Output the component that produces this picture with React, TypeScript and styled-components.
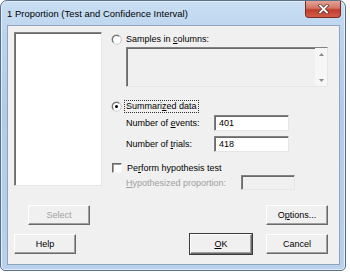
import styled, { createGlobalStyle } from "styled-components"

const Global = createGlobalStyle`
  html, body { margin: 0; padding: 0; background: #ffffff; }
  body { font-family: "Liberation Sans", Arial, sans-serif; font-size: 9px; color: #000; }
`

const Frame = styled.div`
  width: 346px;
  height: 271px;
  box-sizing: border-box;
  border: 1px solid #5a6f88;
  border-radius: 7px 7px 5px 5px;
  background: linear-gradient(180deg, #c9def3 0%, #bcd5ee 12%, #b2cce8 40%, #b9d1ea 100%);
  display: flex;
  flex-direction: column;
  padding: 0 5px 5px 6px;
  box-shadow: inset 0 0 0 1px #e4eef9;
`

const TitleBar = styled.div`
  height: 24px;
  display: flex;
  justify-content: space-between;
  align-items: flex-start;
`

const Title = styled.div`
  font-size: 9.4px;
  margin-top: 7px;
  color: #000;
  letter-spacing: 0.05px;
`

const CloseBtn = styled.div`
  width: 36px;
  height: 17px;
  margin-right: -1px;
  box-sizing: border-box;
  border: 1px solid #7a2a25;
  border-top: none;
  border-radius: 0 0 4px 4px;
  background: linear-gradient(180deg, #e3a597 0%, #d27464 45%, #c03d2c 55%, #d35d48 100%);
  display: flex;
  align-items: center;
  justify-content: center;
  svg { display: block; }
`

const Client = styled.div`
  flex: 1;
  background: #f0f0f0;
  border: 1px solid #8ea4bf;
  padding: 6px 11px 0 6px;
  display: flex;
  flex-direction: column;
`

const TopArea = styled.div`
  display: flex;
  gap: 10px;
`

const Sunken = styled.div<{ $bg?: string }>`
  box-sizing: border-box;
  background: ${(p) => p.$bg || "#ffffff"};
  border: 1px solid;
  border-color: #828282 #e6e6e6 #e6e6e6 #828282;
  box-shadow: inset 1px 1px 0 #696969;
`

const ListBox = styled(Sunken)`
  width: 92px;
  height: 154px;
`

const RightPanel = styled.div`
  flex: 1;
  display: flex;
  flex-direction: column;
`

const OptionRow = styled.label<{ $mt?: number }>`
  display: flex;
  align-items: center;
  gap: 3px;
  height: 12px;
  margin-top: ${(p) => p.$mt || 0}px;
`

const Radio = styled.span<{ $checked?: boolean }>`
  width: 9px;
  height: 9px;
  box-sizing: border-box;
  border-radius: 50%;
  border: 1px solid;
  border-color: #6a6a6a #f8f8f8 #f8f8f8 #6a6a6a;
  background: #fff;
  display: flex;
  align-items: center;
  justify-content: center;
  box-shadow: 0 0 0 0.5px #a0a0a0;
  &::after {
    content: "";
    width: 3px;
    height: 3px;
    border-radius: 50%;
    background: ${(p) => (p.$checked ? "#000" : "transparent")};
  }
`

const Check = styled.span`
  width: 10px;
  height: 10px;
  box-sizing: border-box;
  background: #fff;
  border: 1px solid;
  border-color: #6a6a6a #f4f4f4 #f4f4f4 #6a6a6a;
  box-shadow: inset 1px 1px 0 #9a9a9a;
`

const Caption = styled.span<{ $focus?: boolean }>`
  padding: 0 1px;
  border: 1px ${(p) => (p.$focus ? "dotted #333" : "solid transparent")};
  line-height: 11px;
`

const ColumnsBox = styled(Sunken)`
  width: 202px;
  height: 40px;
  margin: 2px 0 0 14px;
  display: flex;
  justify-content: flex-end;
`

const ScrollCol = styled.div`
  width: 12px;
  display: flex;
  flex-direction: column;
  justify-content: space-between;
  align-items: center;
  padding: 5px 0 4px;
  margin-right: 0;
  background: #f6f6f6;
`

const FieldRow = styled.div<{ $mt: number; $dim?: boolean }>`
  display: flex;
  align-items: center;
  margin: ${(p) => p.$mt}px 0 0 14px;
  color: ${(p) => (p.$dim ? "#a0a0a0" : "#000")};
`

const FieldLabel = styled.span<{ $w: number }>`
  width: ${(p) => p.$w}px;
`

const Input = styled(Sunken)<{ $w: number; $h: number }>`
  width: ${(p) => p.$w}px;
  height: ${(p) => p.$h}px;
  padding-left: 4px;
  display: flex;
  align-items: center;
  color: #000;
`

const ButtonRow = styled.div<{ $mt: number }>`
  display: flex;
  align-items: center;
  margin-top: ${(p) => p.$mt}px;
`

const Button = styled.div<{ $disabled?: boolean; $default?: boolean; $ml?: number }>`
  width: 62px;
  height: 20px;
  box-sizing: border-box;
  margin-left: ${(p) => p.$ml || 0}px;
  background: #f0f0f0;
  border: 1px solid;
  border-color: #ffffff #696969 #696969 #ffffff;
  box-shadow: ${(p) =>
    p.$default ? "inset -1px -1px 0 #a0a0a0, 0 0 0 1px #3c3c3c" : "inset -1px -1px 0 #a0a0a0"};
  display: flex;
  align-items: center;
  justify-content: center;
  color: ${(p) => (p.$disabled ? "#a0a0a0" : "#000")};
`

const Spacer = styled.div`
  flex: 1;
`

function Arrow({ up }: { up?: boolean }) {
  return (
    <svg width="5" height="3" viewBox="0 0 5 3">
      <path d={up ? "M0 3 L2.5 0 L5 3 Z" : "M0 0 L2.5 3 L5 0 Z"} fill="#8a8a8a" />
    </svg>
  )
}

export default function App() {
  return (
    <>
      <Global />
      <Frame>
        <TitleBar>
          <Title>1 Proportion (Test and Confidence Interval)</Title>
          <CloseBtn>
            <svg width="11" height="10" viewBox="0 0 11 10">
              <path d="M2 1.5 L9 8.5 M9 1.5 L2 8.5" stroke="#5a2b26" strokeWidth="3.2" strokeLinecap="square" />
              <path d="M2 1.5 L9 8.5 M9 1.5 L2 8.5" stroke="#ffffff" strokeWidth="1.8" strokeLinecap="square" />
            </svg>
          </CloseBtn>
        </TitleBar>
        <Client>
          <TopArea>
            <ListBox />
            <RightPanel>
              <OptionRow $mt={1}>
                <Radio />
                <Caption>Samples in <u>c</u>olumns:</Caption>
              </OptionRow>
              <ColumnsBox $bg="#f0f0f0">
                <ScrollCol>
                  <Arrow up />
                  <Arrow />
                </ScrollCol>
              </ColumnsBox>
              <OptionRow $mt={13}>
                <Radio $checked />
                <Caption $focus>Summari<u>z</u>ed data</Caption>
              </OptionRow>
              <FieldRow $mt={3}>
                <FieldLabel $w={88}>Number of <u>e</u>vents:</FieldLabel>
                <Input $w={75} $h={16}>401</Input>
              </FieldRow>
              <FieldRow $mt={5}>
                <FieldLabel $w={88}>Number of <u>t</u>rials:</FieldLabel>
                <Input $w={75} $h={16}>418</Input>
              </FieldRow>
              <OptionRow $mt={10}>
                <Check />
                <Caption>Pe<u>r</u>form hypothesis test</Caption>
              </OptionRow>
              <FieldRow $mt={1} $dim>
                <FieldLabel $w={115}><u>H</u>ypothesized proportion:</FieldLabel>
                <Input $w={54} $h={15} $bg="#f0f0f0"></Input>
              </FieldRow>
            </RightPanel>
          </TopArea>
          <ButtonRow $mt={15}>
            <Button $disabled $ml={14}>Select</Button>
            <Spacer />
            <Button>O<u>p</u>tions...</Button>
          </ButtonRow>
          <ButtonRow $mt={9}>
            <Button>Help</Button>
            <Spacer />
            <Button $default><u>O</u>K</Button>
            <Button $ml={14}>Cancel</Button>
          </ButtonRow>
        </Client>
      </Frame>
    </>
  )
}
